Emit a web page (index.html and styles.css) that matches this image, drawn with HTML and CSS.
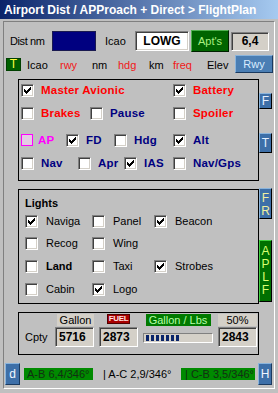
FILE: index.html
```html
<!DOCTYPE html>
<html>
<head>
<meta charset="utf-8">
<link rel="stylesheet" href="styles.css">
</head>
<body>
<div class="title">Airport Dist / APProach + Direct &gt; FlightPlan</div>
<div class="client">
  <div class="row1">
    <span class="dist">Dist nm</span>
    <span class="navybox"></span>
    <span class="icao1">Icao</span>
    <span class="lowg sunk">LOWG</span>
    <span class="apts">Apt's</span>
    <span class="dval sunk">6,4</span>
  </div>
  <div class="row2">
    <span class="tbox">T</span>
    <span class="h w33 ml6">Icao</span>
    <span class="h w32 red2">rwy</span>
    <span class="h w26">nm</span>
    <span class="h w31 red2">hdg</span>
    <span class="h w24">km</span>
    <span class="h w34 red2">freq</span>
    <span class="h w28">Elev</span>
    <span class="rwy">Rwy</span>
  </div>
  <div class="main">
    <div class="boxes">
      <div class="grp g1">
        <div class="crow r1">
          <span class="ck"><span class="cb"><svg viewBox="0 0 11 11" width="11" height="11"><path d="M2 4h1v3h-1zM3 5h1v3h-1zM4 6h1v3h-1zM5 5h1v3h-1zM6 4h1v3h-1zM7 3h1v3h-1zM8 2h1v3h-1z"/></svg></span><span class="tx b red">Master Avionic</span></span>
          <span class="ck"><span class="cb"><svg viewBox="0 0 11 11" width="11" height="11"><path d="M2 4h1v3h-1zM3 5h1v3h-1zM4 6h1v3h-1zM5 5h1v3h-1zM6 4h1v3h-1zM7 3h1v3h-1zM8 2h1v3h-1z"/></svg></span><span class="tx b red">Battery</span></span>
        </div>
        <div class="crow r2">
          <span class="ck"><span class="cb"></span><span class="tx b red">Brakes</span></span>
          <span class="ck"><span class="cb"></span><span class="tx b navy">Pause</span></span>
          <span class="ck"><span class="cb"></span><span class="tx b red">Spoiler</span></span>
        </div>
        <div class="crow r3">
          <span class="ck"><span class="cb ap"></span><span class="tx b mag">AP</span></span>
          <span class="ck"><span class="cb"><svg viewBox="0 0 11 11" width="11" height="11"><path d="M2 4h1v3h-1zM3 5h1v3h-1zM4 6h1v3h-1zM5 5h1v3h-1zM6 4h1v3h-1zM7 3h1v3h-1zM8 2h1v3h-1z"/></svg></span><span class="tx b navy">FD</span></span>
          <span class="ck"><span class="cb"></span><span class="tx b navy">Hdg</span></span>
          <span class="ck"><span class="cb"><svg viewBox="0 0 11 11" width="11" height="11"><path d="M2 4h1v3h-1zM3 5h1v3h-1zM4 6h1v3h-1zM5 5h1v3h-1zM6 4h1v3h-1zM7 3h1v3h-1zM8 2h1v3h-1z"/></svg></span><span class="tx b navy">Alt</span></span>
        </div>
        <div class="crow r4">
          <span class="ck"><span class="cb"></span><span class="tx b navy">Nav</span></span>
          <span class="ck"><span class="cb"></span><span class="tx b navy">Apr</span></span>
          <span class="ck"><span class="cb"><svg viewBox="0 0 11 11" width="11" height="11"><path d="M2 4h1v3h-1zM3 5h1v3h-1zM4 6h1v3h-1zM5 5h1v3h-1zM6 4h1v3h-1zM7 3h1v3h-1zM8 2h1v3h-1z"/></svg></span><span class="tx b navy">IAS</span></span>
          <span class="ck"><span class="cb"></span><span class="tx b navy">Nav/Gps</span></span>
        </div>
      </div>

      <div class="grp g2">
        <div class="ltitle">Lights</div>
        <div class="lrow l1">
          <span class="ck"><span class="cb"><svg viewBox="0 0 11 11" width="11" height="11"><path d="M2 4h1v3h-1zM3 5h1v3h-1zM4 6h1v3h-1zM5 5h1v3h-1zM6 4h1v3h-1zM7 3h1v3h-1zM8 2h1v3h-1z"/></svg></span><span class="tx lt">Naviga</span></span>
          <span class="ck"><span class="cb"></span><span class="tx lt">Panel</span></span>
          <span class="ck"><span class="cb"><svg viewBox="0 0 11 11" width="11" height="11"><path d="M2 4h1v3h-1zM3 5h1v3h-1zM4 6h1v3h-1zM5 5h1v3h-1zM6 4h1v3h-1zM7 3h1v3h-1zM8 2h1v3h-1z"/></svg></span><span class="tx lt">Beacon</span></span>
        </div>
        <div class="lrow l2">
          <span class="ck"><span class="cb"></span><span class="tx lt">Recog</span></span>
          <span class="ck"><span class="cb"></span><span class="tx lt">Wing</span></span>
        </div>
        <div class="lrow l3">
          <span class="ck"><span class="cb"></span><span class="tx lt b">Land</span></span>
          <span class="ck"><span class="cb"></span><span class="tx lt">Taxi</span></span>
          <span class="ck"><span class="cb"><svg viewBox="0 0 11 11" width="11" height="11"><path d="M2 4h1v3h-1zM3 5h1v3h-1zM4 6h1v3h-1zM5 5h1v3h-1zM6 4h1v3h-1zM7 3h1v3h-1zM8 2h1v3h-1z"/></svg></span><span class="tx lt">Strobes</span></span>
        </div>
        <div class="lrow l3">
          <span class="ck"><span class="cb"></span><span class="tx lt">Cabin</span></span>
          <span class="ck"><span class="cb"><svg viewBox="0 0 11 11" width="11" height="11"><path d="M2 4h1v3h-1zM3 5h1v3h-1zM4 6h1v3h-1zM5 5h1v3h-1zM6 4h1v3h-1zM7 3h1v3h-1zM8 2h1v3h-1z"/></svg></span><span class="tx lt">Logo</span></span>
        </div>
      </div>

      <div class="grp g3">
        <span class="flbl gal">Gallon</span>
        <span class="fuel">FUEL</span>
        <span class="glbs">Gallon / Lbs</span>
        <span class="flbl pct">50%</span>
        <span class="cpty">Cpty</span>
        <span class="val sunk">5716</span>
        <span class="val sunk">2873</span>
        <span class="prog"><i></i><i></i><i></i><i></i><i></i><i></i><i></i></span>
        <span class="val sunk">2843</span>
      </div>
    </div>
    <div class="tabs">
      <span class="tab blue tf">F</span>
      <span class="tab blue tt">T</span>
      <span class="tab blue yel tfr"><span>F</span><span>R</span></span>
      <span class="tab green taplf"><span>A</span><span>P</span><span>L</span><span>F</span></span>
    </div>
  </div>
  <div class="status">
    <span class="sbtn">d</span>
    <span class="gstat ab">A-B 6,4/346°</span>
    <span class="plain">| A-C 2,9/346°</span>
    <span class="gstat cb2">| C-B 3,5/346°</span>
    <span class="sbtn hb">H</span>
  </div>
</div>
</body>
</html>
```
FILE: styles.css
```css
* { box-sizing: border-box; }
body {
  margin: 0;
  width: 278px;
  height: 393px;
  overflow: hidden;
  background: #c0c0c0;
  font: 11px "Liberation Sans", Arial, sans-serif;
  color: #000;
}
.title {
  height: 19px;
  padding: 2px 0 0 4px;
  line-height: 17px;
  background: linear-gradient(to right, #0a246a, #a6caf0);
  color: #fff;
  font-weight: bold;
  font-size: 12px;
  white-space: nowrap;
}
.client {
  margin: 2px 3px 0;
  height: 368px;
  border: 1px solid;
  border-color: #808080 #fff #fff #808080;
}
.sunk {
  border: 1px solid;
  border-color: #808080 #fff #fff #808080;
  box-shadow: inset 1px 1px #404040, inset -1px -1px #d4d0c8;
}
/* row 1 */
.row1 {
  display: flex;
  align-items: center;
  height: 22px;
  margin-top: 8px;
  padding-left: 6px;
}
.dist { width: 42px; letter-spacing: -0.4px; }
.navybox {
  width: 44px;
  height: 20px;
  background: #000080;
  border: 1px solid #1a1a50;
}
.icao1 { width: 30px; margin-left: 9px; }
.lowg {
  width: 54px;
  height: 20px;
  background: #fff;
  font-weight: bold;
  font-size: 12px;
  display: flex;
  align-items: center;
  justify-content: center;
}
.apts {
  width: 38px;
  height: 22px;
  margin-left: 2px;
  background: #006400;
  color: #a8f080;
  border: 1px solid;
  border-color: #50b050 #002000 #002000 #50b050;
  display: flex;
  align-items: center;
  justify-content: center;
}
.dval {
  width: 38px;
  height: 19px;
  margin-left: 2px;
  background: #d4d0c8;
  font-weight: bold;
  font-size: 12px;
  display: flex;
  align-items: center;
  justify-content: center;
}
/* row 2 */
.row2 {
  display: flex;
  align-items: center;
  height: 18px;
  margin-top: 3px;
  padding-left: 2px;
}
.tbox {
  width: 15px;
  height: 13px;
  background: #006000;
  color: #ffff40;
  font-size: 12px;
  display: flex;
  align-items: center;
  justify-content: center;
  border: 1px solid #004000;
}
.ml6 { margin-left: 6px; }
.w33 { width: 33px; }
.w32 { width: 32px; }
.w26 { width: 26px; }
.w31 { width: 31px; }
.w24 { width: 24px; }
.w34 { width: 34px; }
.w28 { width: 28px; }
.h { padding-top: 2px; }
.red2 { color: #f01818; }
.rwy {
  width: 38px;
  height: 18px;
  background: #4a7eb4;
  color: #d8ecff;
  border: 1px solid;
  border-color: #8ab4dc #1a3a60 #1a3a60 #8ab4dc;
  display: flex;
  align-items: center;
  justify-content: center;
}
/* main */
.main {
  display: flex;
  margin-top: 6px;
}
.boxes {
  margin-left: 14px;
  width: 241px;
}
.grp { border: 1px solid #000; }
.g1 { height: 102px; padding: 2px 0 0 2px; }
.g2 { height: 115px; margin-top: 8px; padding: 6px 0 0 6px; }
.g3 {
  height: 43px;
  margin-top: 8px;
  padding-top: 1px;
  display: grid;
  grid-template-columns: 31px 39px 39px 70px 39px;
  grid-template-rows: 12px 20px;
  column-gap: 5px;
  row-gap: 1px;
}
.crow { display: grid; height: 16px; align-items: center; }
.r1 { grid-template-columns: 152px 1fr; }
.r2 { grid-template-columns: 69px 83px 1fr; margin-top: 7px; }
.r3 { grid-template-columns: 45px 48px 59px 1fr; margin-top: 11px; }
.r4 { grid-template-columns: 57px 46px 49px 1fr; margin-top: 7px; }
.ck { display: flex; align-items: center; height: 16px; }
.cb {
  width: 13px;
  height: 13px;
  flex: none;
  background: #fff;
  border: 1px solid;
  border-color: #808080 #fff #fff #808080;
  box-shadow: inset 1px 1px #404040, inset -1px -1px #d4d0c8;
}
.cb svg { display: block; shape-rendering: crispEdges; fill: #000; }
.cb.ap {
  width: 12px;
  height: 12px;
  background: #e4cce4;
  border: 1px solid #ff00ff;
  box-shadow: none;
}
.tx { margin-left: 7px; white-space: nowrap; }
.b { font-weight: bold; }
.g1 .tx { letter-spacing: 0.2px; font-size: 11.5px; }
.red { color: #ff0000; }
.navy { color: #000080; }
.mag { color: #ff00ff; margin-left: 5px; }
.ltitle { height: 14px; font-weight: bold; line-height: 14px; }
.lrow {
  display: grid;
  grid-template-columns: 67px 62px 1fr;
  height: 16px;
  margin-top: 7px;
}
.l1 { margin-top: 3px; }
.l2 { margin-top: 6px; }
.lt { margin-left: 8px; }
/* fuel */
.flbl {
  background: #d4d0c8;
  display: flex;
  align-items: center;
  justify-content: center;
}
.gal { grid-column: 2; width: 37px; justify-self: end; }
.pct { grid-column: 5; }
.fuel {
  grid-column: 3;
  justify-self: center;
  width: 23px;
  height: 10px;
  background: #a80000;
  border: 1px solid #500000;
  color: #ffe0e0;
  font-size: 8px;
  font-weight: bold;
  line-height: 8px;
  text-align: center;
  letter-spacing: -0.3px;
}
.glbs {
  grid-column: 4;
  justify-self: center;
  width: 65px;
  background: #007a00;
  color: #b8ffa8;
  display: flex;
  align-items: center;
  justify-content: center;
  white-space: nowrap;
}
.cpty { grid-row: 2; grid-column: 1; padding-left: 6px; align-self: center; }
.val {
  background: #d4d0c8;
  font-weight: bold;
  font-size: 12px;
  padding-left: 3px;
  display: flex;
  align-items: center;
}
.prog {
  align-self: center;
  height: 10px;
  margin-top: 1px;
  border: 1px solid;
  border-color: #808080 #fff #fff #808080;
  background: #d4d0c8;
  display: flex;
  gap: 2px;
  padding: 1px 2px;
}
.prog i { width: 3px; background: #0a246a; }
/* tabs */
.tabs {
  width: 13px;
  display: flex;
  flex-direction: column;
  padding-top: 14px;
}
.tab {
  display: flex;
  flex-direction: column;
  align-items: center;
  justify-content: center;
  font-size: 12px;
  line-height: 13px;
  border: 1px solid;
}
.blue {
  background: #3d6fa8;
  color: #e4f0ff;
  border-color: #8ab4dc #000 #000 #8ab4dc;
}
.yel { color: #f0f0a0; }
.green {
  background: #007000;
  color: #d8ff70;
  border-color: #40d040 #000 #000 #40d040;
}
.tf { height: 16px; }
.tt { height: 20px; margin-top: 24px; }
.tfr { height: 31px; margin-top: 35px; justify-content: flex-start; padding-top: 3px; }
.taplf { height: 62px; margin-top: 21px; justify-content: flex-start; padding-top: 4px; }
/* status */
.status {
  display: flex;
  align-items: center;
  height: 22px;
  margin-top: 8px;
  padding-left: 1px;
}
.sbtn {
  width: 15px;
  height: 22px;
  background: #3d6fa8;
  color: #f0f6ff;
  font-size: 12px;
  border: 1px solid;
  border-color: #8ab4dc #1a3a60 #1a3a60 #8ab4dc;
  display: flex;
  align-items: center;
  justify-content: center;
}
.hb { width: 14px; margin-left: 3px; }
.gstat {
  height: 12px;
  background: #008a00;
  color: #123012;
  line-height: 12px;
  white-space: nowrap;
  padding-left: 3px;
}
.ab { width: 69px; margin-left: 4px; }
.plain { width: 78px; margin-left: 10px; white-space: nowrap; }
.cb2 { width: 74px; padding-left: 4px; }
```
